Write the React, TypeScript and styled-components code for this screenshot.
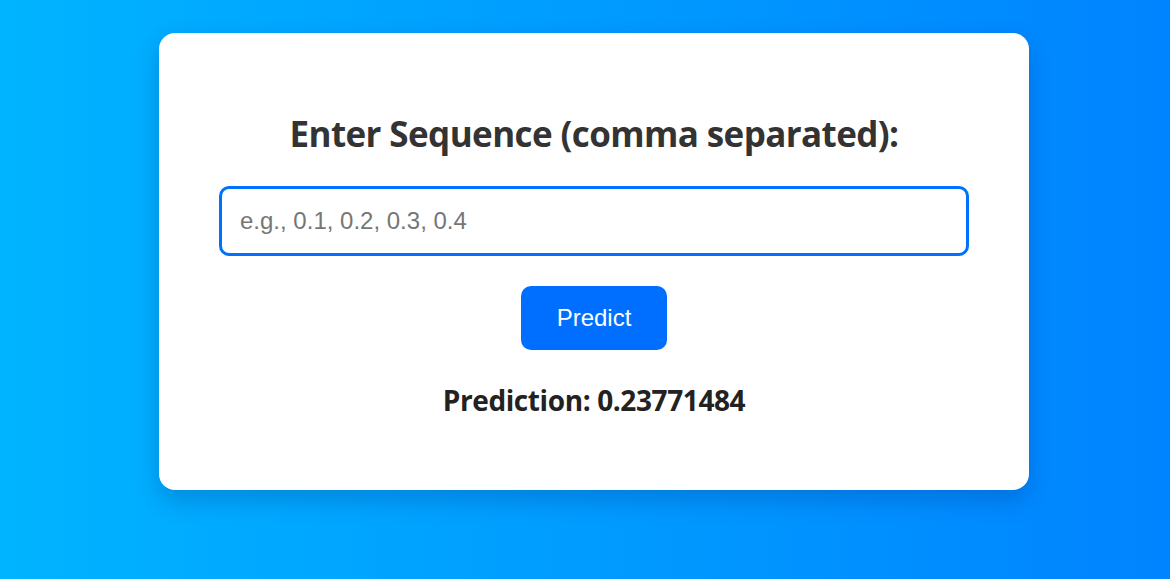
import React from "react";
import styled, { createGlobalStyle } from "styled-components";

const Global = createGlobalStyle`
  html, body { margin: 0; padding: 0; height: 100%; }
  body {
    background: linear-gradient(to right, #00b4ff, #0084ff);
    font-family: "Open Sans", "Noto Sans", sans-serif;
  }
  #root { min-height: 100%; }
`;

const Page = styled.div`
  min-height: 579px;
  display: flex;
  justify-content: center;
  align-items: flex-start;
  padding: 33px 0 0 18px;
  box-sizing: border-box;
`;

const Card = styled.div`
  width: 870px;
  height: 457px;
  box-sizing: border-box;
  background: #fff;
  border-radius: 16px;
  box-shadow: 0 10px 25px rgba(0, 40, 120, 0.25);
  padding: 78px 60px 0;
  display: flex;
  flex-direction: column;
  align-items: center;
`;

const Title = styled.h2`
  margin: 0;
  font-family: "Open Sans", sans-serif;
  font-weight: 700;
  font-size: 35px;
  line-height: 46px;
  letter-spacing: -0.6px;
  color: #333;
`;

const Input = styled.input`
  margin-top: 29px;
  width: 750px;
  height: 70px;
  box-sizing: border-box;
  border: 3px solid #0070ff;
  border-radius: 10px;
  padding: 0 18px;
  font-family: "Liberation Sans", Arial, sans-serif;
  font-size: 24px;
  color: #333;
  outline: none;
  &::placeholder { color: #767676; }
`;

const Button = styled.button`
  margin-top: 30px;
  width: 146px;
  height: 64px;
  border: none;
  border-radius: 10px;
  background: #006fff;
  color: #fff;
  font-family: "Liberation Sans", Arial, sans-serif;
  font-size: 24px;
  cursor: pointer;
`;

const Result = styled.div`
  margin-top: 33px;
  font-family: "Open Sans", sans-serif;
  font-weight: 700;
  font-size: 28px;
  letter-spacing: -0.4px;
  line-height: 34px;
  color: #222;
`;

export default function App() {
  return (
    <>
      <Global />
      <Page>
        <Card>
          <Title>Enter Sequence (comma separated):</Title>
          <Input placeholder="e.g., 0.1, 0.2, 0.3, 0.4" />
          <Button>Predict</Button>
          <Result>Prediction: 0.23771484</Result>
        </Card>
      </Page>
    </>
  );
}
